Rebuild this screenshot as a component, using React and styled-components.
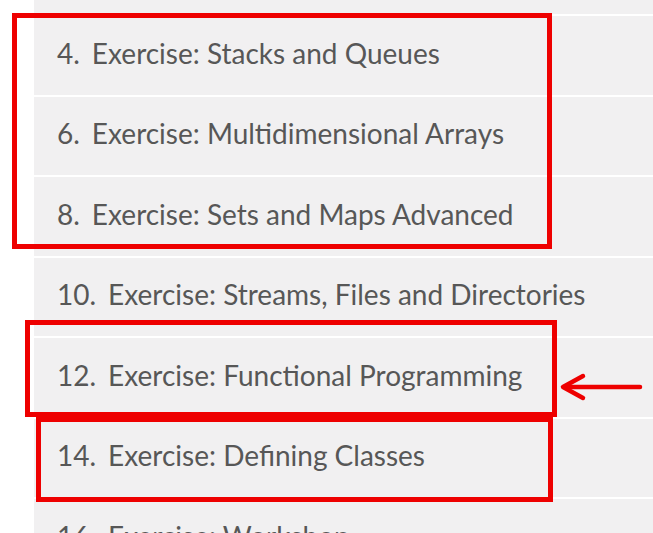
import React from "react";
import styled, { createGlobalStyle } from "styled-components";

const Global = createGlobalStyle`
  html, body { margin: 0; padding: 0; background: #ffffff; overflow: hidden; }
  body { font-family: "Lato", "Noto Sans", sans-serif; }
`;

const Page = styled.div`
  position: relative;
  width: 653px;
  height: 533px;
  overflow: hidden;
  background: #ffffff;
  padding-left: 34px;
  box-sizing: border-box;
`;

const List = styled.ul`
  list-style: none;
  margin: 0;
  padding: 0;
  display: flex;
  flex-direction: column;
  gap: 2px;
  background: #ffffff;
`;

const Row = styled.li`
  flex: none;
  height: ${(p) => (p.$partial ? "14px" : "78.5px")};
  background: #f1f0f1;
  display: flex;
  align-items: center;
  padding-left: 23px;
  padding-bottom: 5px;
  box-sizing: border-box;
  font-size: 28px;
  color: #575757;
  white-space: nowrap;
`;

const Num = styled.span`
  margin-right: 12px;
`;

const Box = styled.div`
  position: absolute;
  border: 5px solid #ee0000;
  box-sizing: border-box;
  pointer-events: none;
`;

const Arrow = styled.svg`
  position: absolute;
  left: 556px;
  top: 370px;
`;

const items = [
  ["4.", "Exercise: Stacks and Queues"],
  ["6.", "Exercise: Multidimensional Arrays"],
  ["8.", "Exercise: Sets and Maps Advanced"],
  ["10.", "Exercise: Streams, Files and Directories"],
  ["12.", "Exercise: Functional Programming"],
  ["14.", "Exercise: Defining Classes"],
  ["16.", "Exercise: Workshop"],
];

const boxes = [
  { left: 12, top: 13, width: 540, height: 236 },
  { left: 25, top: 320, width: 532, height: 97 },
  { left: 36, top: 417, width: 517, height: 85 },
];

export default function App() {
  return (
    <>
      <Global />
      <Page>
        <List>
          <Row $partial />
          {items.map(([n, t]) => (
            <Row key={n}>
              <Num>{n}</Num>
              {t}
            </Row>
          ))}
        </List>
        {boxes.map((b, i) => (
          <Box key={i} style={b} />
        ))}
        <Arrow width="90" height="34" viewBox="0 0 90 34">
          <path d="M84 17 H8" stroke="#ee0000" strokeWidth="4.5" strokeLinecap="round" fill="none" />
          <path d="M27 6 L7 17 L27 28" stroke="#ee0000" strokeWidth="4.5" strokeLinecap="round" strokeLinejoin="round" fill="none" />
        </Arrow>
      </Page>
    </>
  );
}
